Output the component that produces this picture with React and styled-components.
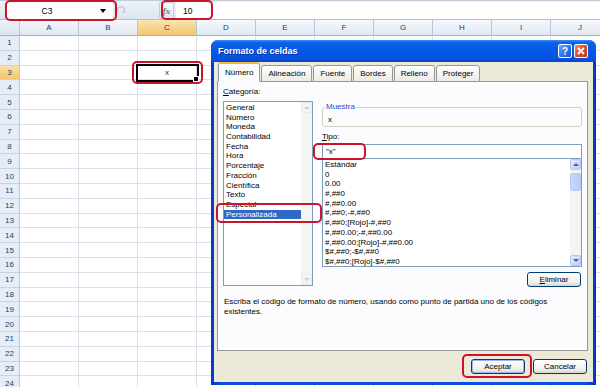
import React from 'react';
import styled, { createGlobalStyle, css } from 'styled-components';

const COLUMNS = ['A', 'B', 'C', 'D', 'E', 'F', 'G', 'H', 'I', 'J'];
const ROW_COUNT = 24;
const ACTIVE_COL = 'C';
const ACTIVE_ROW = 3;

const TABS = ['Número', 'Alineación', 'Fuente', 'Bordes', 'Relleno', 'Proteger'];

const CATEGORIES = [
  'General',
  'Número',
  'Moneda',
  'Contabilidad',
  'Fecha',
  'Hora',
  'Porcentaje',
  'Fracción',
  'Científica',
  'Texto',
  'Especial',
  'Personalizada',
];

const FORMATS = [
  'Estándar',
  '0',
  '0.00',
  '#,##0',
  '#,##0.00',
  '#,##0;-#,##0',
  '#,##0;[Rojo]-#,##0',
  '#,##0.00;-#,##0.00',
  '#,##0.00;[Rojo]-#,##0.00',
  '$#,##0;-$#,##0',
  '$#,##0;[Rojo]-$#,##0',
];

// red annotation rings drawn over the screenshot
const MARKS = [
  { left: 5, top: 0, width: 112, height: 21 },
  { left: 161, top: 0, width: 52, height: 20 },
  { left: 132, top: 61, width: 71, height: 23 },
  { left: 313, top: 143, width: 53, height: 17 },
  { left: 216, top: 203, width: 106, height: 20 },
  { left: 462, top: 354, width: 70, height: 24 },
];

const GlobalStyle = createGlobalStyle`
  html, body {
    margin: 0;
    padding: 0;
    background: #ffffff;
  }

  body {
    font-family: "Liberation Sans", Arial, sans-serif;
  }
`;

const App = () => {
  const rows = Array.from({ length: ROW_COUNT }, (_, i) => i + 1);

  return (
    <Screen>
      <GlobalStyle />

      <FormulaBar>
        <NameBox>
          <NameText>C3</NameText>
          <DropArrow />
        </NameBox>
        <ExpandHandle viewBox="0 0 10 10">
          <path d="M2 7 A3.5 3.5 0 1 1 8 7" fill="none" stroke="#b9c3cf" strokeWidth="1.2" />
          <path d="M6 7.5 L8 7 L8.4 5" fill="none" stroke="#b9c3cf" strokeWidth="1" />
        </ExpandHandle>
        <FxButton>fx</FxButton>
        <FormulaInput>10</FormulaInput>
      </FormulaBar>

      <Sheet>
        <Corner />
        {COLUMNS.map((col) => (
          <ColHeader key={col} active={col === ACTIVE_COL}>
            {col}
          </ColHeader>
        ))}

        {rows.map((row) => (
          <React.Fragment key={row}>
            <RowHeader active={row === ACTIVE_ROW}>{row}</RowHeader>
            {COLUMNS.map((col) => {
              const selected = row === ACTIVE_ROW && col === ACTIVE_COL;
              return (
                <Cell key={col} selected={selected}>
                  {selected && 'x'}
                  {selected && <FillHandle />}
                </Cell>
              );
            })}
          </React.Fragment>
        ))}
      </Sheet>

      <Dialog>
        <TitleBar>
          <TitleText>Formato de celdas</TitleText>
          <TitleButton>?</TitleButton>
          <TitleButton close>
            <svg width="8" height="8" viewBox="0 0 8 8">
              <path d="M1 1 L7 7 M7 1 L1 7" stroke="#fff" strokeWidth="1.8" />
            </svg>
          </TitleButton>
        </TitleBar>

        <DialogBody>
          <TabStrip>
            {TABS.map((tab, i) => (
              <Tab key={tab} active={i === 0}>
                {tab}
              </Tab>
            ))}
          </TabStrip>

          <TabPanel>
            <Columns>
              <LeftColumn>
                <FieldLabel>
                  <u>C</u>ategoría:
                </FieldLabel>
                <ListBox height={185}>
                  <ListItems>
                    {CATEGORIES.map((item) => (
                      <ListItem key={item} selected={item === 'Personalizada'}>
                        {item}
                      </ListItem>
                    ))}
                  </ListItems>
                  <ScrollBar>
                    <ScrollArrow disabled>
                      <ArrowGlyph up />
                    </ScrollArrow>
                    <ScrollTrack />
                    <ScrollArrow disabled>
                      <ArrowGlyph />
                    </ScrollArrow>
                  </ScrollBar>
                </ListBox>
              </LeftColumn>

              <RightColumn>
                <SampleGroup>
                  <SampleLegend>Muestra</SampleLegend>
                  <SampleValue>x</SampleValue>
                </SampleGroup>

                <FieldLabel spaced>
                  <u>T</u>ipo:
                </FieldLabel>
                <TypeInput>"x"</TypeInput>

                <ListBox height={108} joined>
                  <ListItems>
                    {FORMATS.map((item) => (
                      <ListItem key={item}>{item}</ListItem>
                    ))}
                  </ListItems>
                  <ScrollBar>
                    <ScrollArrow>
                      <ArrowGlyph up />
                    </ScrollArrow>
                    <ScrollTrack>
                      <ScrollThumb />
                    </ScrollTrack>
                    <ScrollArrow>
                      <ArrowGlyph />
                    </ScrollArrow>
                  </ScrollBar>
                </ListBox>

                <DeleteRow>
                  <PushButton>
                    <u>E</u>liminar
                  </PushButton>
                </DeleteRow>
              </RightColumn>
            </Columns>

            <Description>
              Escriba el código de formato de número, usando como punto de
              partida uno de los códigos existentes.
            </Description>
          </TabPanel>

          <Footer>
            <PushButton primary>Aceptar</PushButton>
            <PushButton>Cancelar</PushButton>
          </Footer>
        </DialogBody>
      </Dialog>

      {MARKS.map((mark, i) => (
        <Mark key={i} style={mark} />
      ))}
    </Screen>
  );
};

const Screen = styled.div`
  position: relative;

  width: 600px;
  height: 387px;
  overflow: hidden;

  background: #ffffff;
  color: #000000;

  font-family: "Liberation Sans", Arial, sans-serif;
`;

/* ---------- formula bar ---------- */

const FormulaBar = styled.div`
  display: flex;
  align-items: stretch;

  height: 17px;
  padding: 1px 0 0;

  border-top: 1px solid #c3ccd8;
  border-bottom: 1px solid #b3c0d1;
  background: linear-gradient(#eef2f7, #dde5ef);
`;

const NameBox = styled.div`
  display: flex;
  align-items: center;

  width: 107px;
  margin-left: 6px;

  background: #ffffff;

  font-size: 8.5px;
`;

const NameText = styled.span`
  flex: 1;

  padding-right: 12px;

  text-align: center;
`;

const DropArrow = styled.span`
  width: 0;
  height: 0;
  margin-right: 7px;

  border-top: 4px solid #000000;
  border-left: 3px solid transparent;
  border-right: 3px solid transparent;
`;

const ExpandHandle = styled.svg`
  width: 10px;
  height: 10px;
  margin: 3px 0 0 3px;
`;

const FxButton = styled.div`
  display: flex;
  align-items: center;
  justify-content: center;

  width: 13px;
  margin-left: 33px;

  border: 1px solid #c3ccd8;
  border-radius: 2px;
  background: linear-gradient(#f7f9fc, #dfe6ef);
  color: #6b7480;

  font-family: "Liberation Serif", serif;
  font-style: italic;
  font-weight: bold;
  font-size: 9px;
`;

const FormulaInput = styled.div`
  display: flex;
  align-items: center;

  flex: 1;
  padding-left: 7px;
  margin-left: 2px;

  background: #ffffff;

  font-size: 8.5px;
`;

/* ---------- sheet grid ---------- */

const Sheet = styled.div`
  display: grid;

  grid-template-columns: 20px repeat(10, 59px);
  grid-template-rows: 16px repeat(${ROW_COUNT}, 14.8px);

  font-size: 8px;
`;

const headerBase = css`
  display: flex;
  align-items: center;
  justify-content: center;

  border-right: 1px solid #b7c6d9;
  border-bottom: 1px solid #9fb3cb;

  color: #27415f;
`;

const Corner = styled.div`
  ${headerBase};
  background: linear-gradient(#eef2f8, #dbe4ef);
`;

const ColHeader = styled.div`
  ${headerBase};

  background: ${({ active }) =>
    active
      ? 'linear-gradient(#fbe3b0, #f3c56e)'
      : 'linear-gradient(#f5f8fc, #e0e8f2)'};
`;

const RowHeader = styled.div`
  ${headerBase};

  border-bottom-color: #c5d3e3;
  background: ${({ active }) =>
    active ? 'linear-gradient(#fbe0a6, #f3c56e)' : '#e6edf6'};
`;

const Cell = styled.div`
  position: relative;

  display: flex;
  align-items: center;
  justify-content: center;

  border-right: 1px solid #d9e0ea;
  border-bottom: 1px solid #d9e0ea;

  color: #333333;

  ${({ selected }) =>
    selected &&
    css`
      box-shadow: 0 0 0 2px #000000;
      z-index: 1;
    `}
`;

const FillHandle = styled.span`
  position: absolute;
  right: -3px;
  bottom: -3px;

  width: 4px;
  height: 4px;

  border: 1px solid #ffffff;
  background: #000000;
`;

/* ---------- dialog ---------- */

const Dialog = styled.div`
  position: absolute;
  left: 211px;
  top: 40px;
  z-index: 5;

  display: flex;
  flex-direction: column;

  width: 385px;
  height: 345px;
  padding: 0 3px 3px;
  box-sizing: border-box;

  border-radius: 7px 7px 0 0;
  background: linear-gradient(90deg, #0838c8, #0a50e0 3%, #0a50e0 97%, #0634b8);
`;

const TitleBar = styled.div`
  display: flex;
  align-items: center;
  gap: 2px;

  height: 22px;
  margin: 0 -3px;
  padding: 0 8px 0 7px;

  border-radius: 7px 7px 0 0;
  background: linear-gradient(
    #3d8df7 0%,
    #0b61ea 12%,
    #0558e6 55%,
    #0751e0 85%,
    #0a45c6 100%
  );
`;

const TitleText = styled.span`
  flex: 1;

  color: #ffffff;

  font-weight: bold;
  font-size: 9px;
  text-shadow: 1px 1px 0 #0a2a90;
`;

const TitleButton = styled.span`
  display: flex;
  align-items: center;
  justify-content: center;

  width: 12px;
  height: 12px;

  border: 1px solid #ffffff;
  border-radius: 2px;
  background: ${({ close }) =>
    close
      ? 'linear-gradient(135deg, #f08a6c, #d8451f 60%, #c23a15)'
      : 'linear-gradient(135deg, #6fa8ff, #2a6cf0 60%, #1c55d8)'};
  color: #ffffff;

  font-weight: bold;
  font-size: 10px;
`;

const DialogBody = styled.div`
  display: flex;
  flex-direction: column;

  flex: 1;
  padding: 2px 5px 0 3px;

  background: #ece9d8;
`;

const TabStrip = styled.div`
  position: relative;
  z-index: 1;

  display: flex;
  align-items: flex-end;

  height: 18px;
  margin-bottom: -1px;
  padding-left: 1px;
`;

const Tab = styled.div`
  display: flex;
  align-items: center;
  justify-content: center;

  padding: 0 6px;
  height: ${({ active }) => (active ? 17 : 15)}px;
  margin-right: 1px;

  border: 1px solid #919b9c;
  border-bottom: ${({ active }) => (active ? '1px solid #fcfcfe' : '1px solid #919b9c')};
  border-top: ${({ active }) => (active ? '2px solid #f5b835' : '1px solid #919b9c')};
  border-radius: 3px 3px 0 0;
  background: ${({ active }) =>
    active ? '#fcfcfe' : 'linear-gradient(#ffffff, #ecebe5)'};

  font-size: 8px;
`;

const TabPanel = styled.div`
  display: flex;
  flex-direction: column;

  width: 371px;
  height: 270px;
  padding: 5px 5px 0;
  box-sizing: border-box;

  border: 1px solid #919b9c;
  background: #fcfcfe;
`;

const Columns = styled.div`
  display: grid;

  grid-template-columns: 90px 260px;
  gap: 9px;
`;

const LeftColumn = styled.div`
  display: flex;
  flex-direction: column;
`;

const RightColumn = styled.div`
  display: flex;
  flex-direction: column;

  padding-top: 15px;
`;

const FieldLabel = styled.div`
  height: 10px;
  margin: ${({ spaced }) => (spaced ? '5px 0 2px' : '0 0 4px')};

  font-size: 8px;
  line-height: 10px;
`;

const ListBox = styled.div`
  display: flex;
  flex-shrink: 0;

  height: ${({ height }) => height}px;
  box-sizing: border-box;

  border: 1px solid #7f9db9;
  ${({ joined }) => joined && 'border-top: none;'}
  background: #ffffff;

  font-size: 8px;
`;

const ListItems = styled.div`
  flex: 1;

  padding-top: 1px;
  overflow: hidden;
`;

const ListItem = styled.div`
  width: fit-content;
  min-width: ${({ selected }) => (selected ? '75px' : '0')};
  height: 9.7px;
  padding: 0 2px;

  background: ${({ selected }) => (selected ? '#316ac5' : 'transparent')};
  color: ${({ selected }) => (selected ? '#ffffff' : '#000000')};

  line-height: 9.7px;
  white-space: nowrap;
`;

const ScrollBar = styled.div`
  display: flex;
  flex-direction: column;

  width: 11px;

  background: #f4f4f0;
`;

const ScrollArrow = styled.div`
  display: flex;
  align-items: center;
  justify-content: center;

  height: 11px;

  border: 1px solid ${({ disabled }) => (disabled ? '#e8ebf2' : '#b4c8f6')};
  border-radius: 2px;
  box-sizing: border-box;
  background: ${({ disabled }) =>
    disabled ? '#f3f4f6' : 'linear-gradient(135deg, #e2ebfe, #b9cefa)'};
  color: ${({ disabled }) => (disabled ? '#c9cfd8' : '#4d6185')};
`;

const ArrowGlyph = styled.span`
  width: 0;
  height: 0;

  border-left: 3px solid transparent;
  border-right: 3px solid transparent;
  ${({ up }) =>
    up ? 'border-bottom: 3px solid currentColor;' : 'border-top: 3px solid currentColor;'}
`;

const ScrollTrack = styled.div`
  flex: 1;

  padding-top: 3px;
`;

const ScrollThumb = styled.div`
  height: 18px;

  border: 1px solid #b4c8f6;
  border-radius: 2px;
  box-sizing: border-box;
  background: linear-gradient(90deg, #c9d8fc, #b8cbf8);
`;

const SampleGroup = styled.fieldset`
  flex-shrink: 0;

  height: 25px;
  margin: 0;
  padding: 0 5px;
  box-sizing: border-box;

  border: 1px solid #d0d0bf;
  border-radius: 3px;
`;

const SampleLegend = styled.legend`
  padding: 0 1px;
  margin-left: -3px;

  color: #1a4fcf;

  font-size: 8px;
  line-height: 10px;
`;

const SampleValue = styled.div`
  padding-top: 3px;

  font-size: 8px;
  line-height: 10px;
`;

const TypeInput = styled.div`
  display: flex;
  align-items: center;
  flex-shrink: 0;

  height: 15px;
  padding-left: 3px;
  box-sizing: border-box;

  border: 1px solid #7f9db9;
  background: #ffffff;

  font-size: 8px;
`;

const DeleteRow = styled.div`
  display: flex;
  justify-content: flex-end;

  margin-top: 5px;
  padding-right: 1px;
`;

const PushButton = styled.div`
  display: flex;
  align-items: center;
  justify-content: center;

  width: 54px;
  height: 15px;
  box-sizing: border-box;

  border: 1px solid #003c74;
  border-radius: 3px;
  background: linear-gradient(#ffffff, #f1f0ea 70%, #d8d5c8);

  font-size: 8px;

  ${({ primary }) =>
    primary &&
    css`
      box-shadow: inset 0 0 0 1px #99b8f3;
    `}
`;

const Description = styled.p`
  max-width: 330px;
  margin: 10px 0 0 1px;

  font-size: 8px;
  line-height: 10px;
`;

const Footer = styled.div`
  display: flex;
  justify-content: flex-end;
  gap: 8px;

  margin-top: 8px;
  padding-right: 1px;
`;

const Mark = styled.div`
  position: absolute;
  z-index: 10;

  box-sizing: border-box;

  border: 2px solid #c8152b;
  border-radius: 5px;

  pointer-events: none;
`;

export default App;
